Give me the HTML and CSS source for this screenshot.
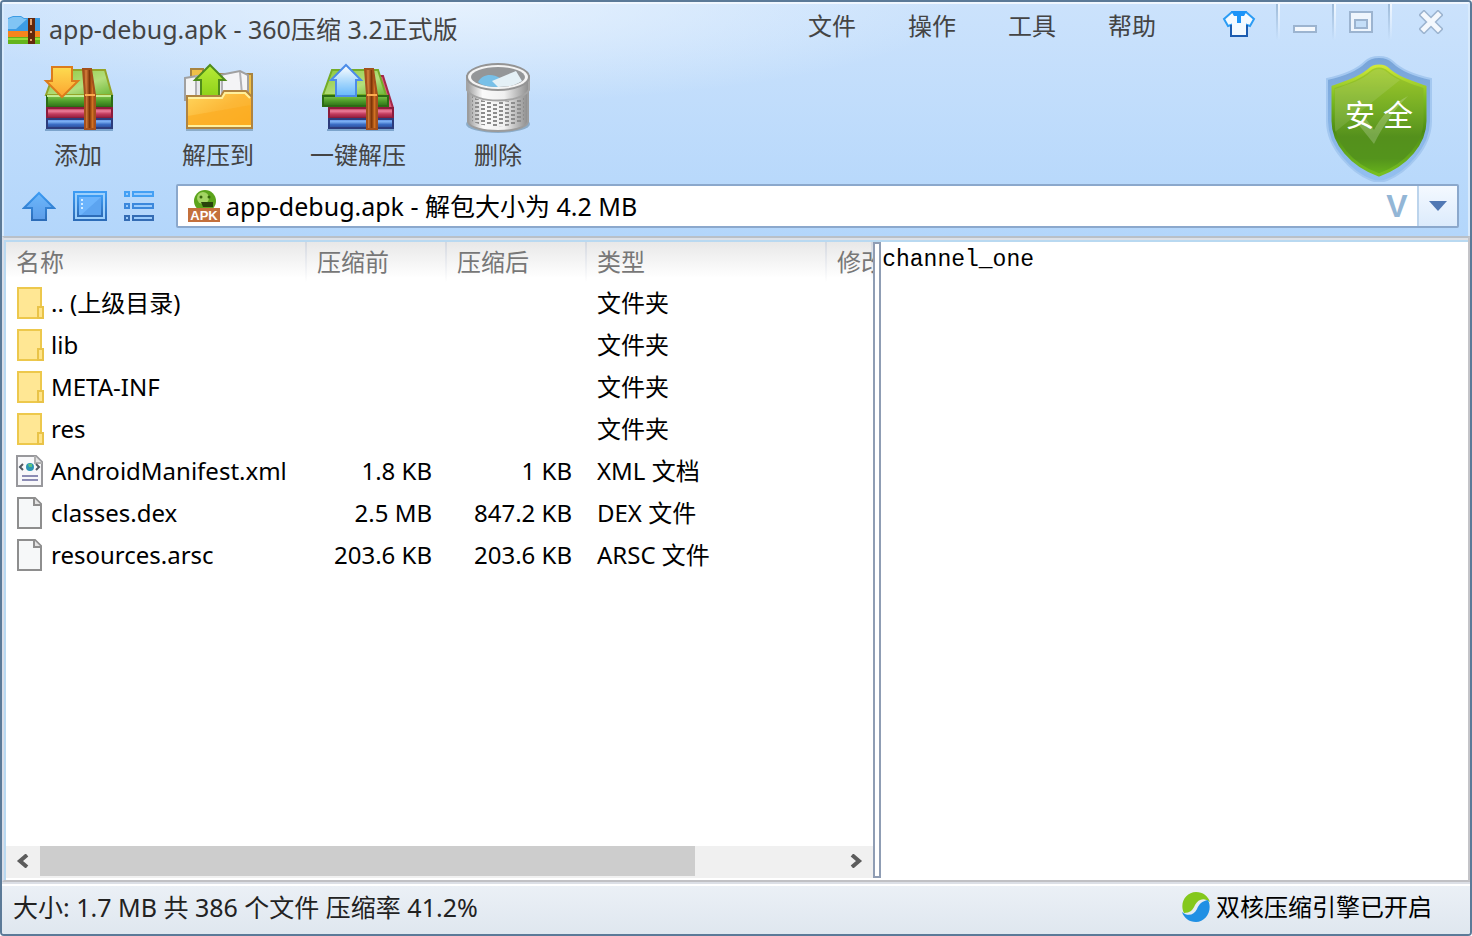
FILE: index.html
```html
<!DOCTYPE html>
<html lang="zh-CN">
<head>
    <meta charset="UTF-8">
    <meta name="viewport" content="width=device-width, initial-scale=1.0">
    <title>app-debug.apk - 360压缩</title>
    <link rel="stylesheet" href="styles.css">
</head>
<body>
    <!-- shared gradients -->
    <svg class="defs" width="0" height="0" aria-hidden="true">
        <defs>
            <linearGradient id="gGreenTop" x1="0" y1="0" x2="1" y2="1"><stop offset="0" stop-color="#8cc83c"/><stop offset=".6" stop-color="#b4de7c"/><stop offset="1" stop-color="#6db83a"/></linearGradient>
            <linearGradient id="gGreen" x1="0" y1="0" x2="0" y2="1"><stop offset="0" stop-color="#7cc44a"/><stop offset=".5" stop-color="#4f9c2a"/><stop offset="1" stop-color="#2f7018"/></linearGradient>
            <linearGradient id="gPink" x1="0" y1="0" x2="0" y2="1"><stop offset="0" stop-color="#b02848"/><stop offset=".3" stop-color="#ee7f9c"/><stop offset=".6" stop-color="#c23a5c"/><stop offset="1" stop-color="#8c1c3c"/></linearGradient>
            <linearGradient id="gBlue" x1="0" y1="0" x2="0" y2="1"><stop offset="0" stop-color="#5a8ae0"/><stop offset=".3" stop-color="#7cb0f4"/><stop offset=".6" stop-color="#3a6cc4"/><stop offset="1" stop-color="#2c4c98"/></linearGradient>
            <linearGradient id="gStrap" x1="0" y1="0" x2="1" y2="0"><stop offset="0" stop-color="#8a3c0c"/><stop offset=".25" stop-color="#d8803c"/><stop offset=".55" stop-color="#7c3408"/><stop offset=".8" stop-color="#d47424"/><stop offset="1" stop-color="#8a3c0c"/></linearGradient>
            <linearGradient id="gOrange" x1="0" y1="0" x2="0" y2="1"><stop offset="0" stop-color="#fddc50"/><stop offset="1" stop-color="#fca430"/></linearGradient>
            <linearGradient id="gLime" x1="0" y1="0" x2="0" y2="1"><stop offset="0" stop-color="#b8ec38"/><stop offset="1" stop-color="#8cd018"/></linearGradient>
            <linearGradient id="gSky" x1="0" y1="0" x2="0" y2="1"><stop offset="0" stop-color="#ffffff"/><stop offset=".6" stop-color="#a0d4fc"/><stop offset="1" stop-color="#68b8fc"/></linearGradient>
            <linearGradient id="gFolder" x1="0" y1="0" x2="1" y2="1"><stop offset="0" stop-color="#ffd860"/><stop offset=".5" stop-color="#fcb838"/><stop offset="1" stop-color="#fcac20"/></linearGradient>
            <linearGradient id="gMetal" x1="0" y1="0" x2="1" y2="0"><stop offset="0" stop-color="#9c9c9c"/><stop offset=".25" stop-color="#fafafa"/><stop offset=".6" stop-color="#f0f0f0"/><stop offset="1" stop-color="#8c8c8c"/></linearGradient>
            <linearGradient id="gNav" x1="0" y1="0" x2="0" y2="1"><stop offset="0" stop-color="#3c9cf4"/><stop offset="1" stop-color="#2c6cb8"/></linearGradient>
            <linearGradient id="gNavFill" x1="0" y1="0" x2="0" y2="1"><stop offset="0" stop-color="#6cb8fc"/><stop offset="1" stop-color="#5c9ce8"/></linearGradient>
            <linearGradient id="gShield" x1="0" y1="0" x2="0" y2="1"><stop offset="0" stop-color="#a4cc2c"/><stop offset=".4" stop-color="#74ac24"/><stop offset=".65" stop-color="#54901c"/><stop offset=".85" stop-color="#54941c"/><stop offset="1" stop-color="#68b41c"/></linearGradient>
            <linearGradient id="gShieldEdge" x1="0" y1="0" x2="0" y2="1"><stop offset="0" stop-color="#d0e838"/><stop offset=".3" stop-color="#7cbc20"/><stop offset=".6" stop-color="#4c8c14"/><stop offset="1" stop-color="#78c020"/></linearGradient>
            <linearGradient id="gShieldRim" x1="0" y1="0" x2="0" y2="1"><stop offset="0" stop-color="#78a4d8"/><stop offset="1" stop-color="#94c0f0"/></linearGradient>
            <pattern id="pMesh" width="12" height="8" patternUnits="userSpaceOnUse"><path d="M1 1h4M1 5h4M7 3h4M7 7h4" stroke="#8c8c8c" stroke-width="2"/></pattern>
            <symbol id="folder" viewBox="0 0 28 32">
                <path d="M2 1h23v30H2z" fill="#ffe794" stroke="#edc84c" stroke-width="2"/>
                <path d="M22 31V20h5v11z" fill="#ffe48a" stroke="#e9c348" stroke-width="2"/>
            </symbol>
            <symbol id="file" viewBox="0 0 28 32">
                <path d="M2 1h17l6 6v24H2z" fill="#f6f8f9" stroke="#8e8e8e" stroke-width="2"/>
                <path d="M18 1v7h7" fill="#e4e4e4" stroke="#8e8e8e" stroke-width="2"/>
            </symbol>
        </defs>
    </svg>

    <div class="window">
        <header class="top">
            <div class="title-row">
                <svg class="app-icon" width="32" height="28" viewBox="0 0 32 28">
                    <path d="M0 2l5-2h8l3 2h16v14H0z" fill="#3c9ce4"/>
                    <path d="M0 3l5-2h8l3 2h3L8 13H0z" fill="#80c4f4"/>
                    <path d="M0 15h32v6H0z" fill="#f8841c"/>
                    <path d="M0 21h32v7H0z" fill="#64b41c"/>
                    <path d="M0 22h32v2H0z" fill="#94dc38"/>
                    <path d="M20 2h7v26h-7z" fill="#64280c"/>
                    <path d="M23 3v6M23 15v2M23 23v2" stroke="#e4a470" stroke-width="2"/>
                </svg>
                <h1 class="title">app-debug.apk - 360压缩 3.2正式版</h1>
                <nav class="menu">
                    <button>文件</button>
                    <button>操作</button>
                    <button>工具</button>
                    <button>帮助</button>
                </nav>
                <button class="skin" aria-label="换肤">
                    <svg width="34" height="28" viewBox="0 0 34 28">
                        <path d="M10 2L2 9l4 7 3-1v11h16V15l3 1 4-7-8-7z" fill="#f4faff" stroke="#2c9cf4" stroke-width="2"/>
                        <path d="M9 15v11h16V15" fill="none" stroke="#1c5cb0" stroke-width="2"/>
                        <path d="M9 1h16l-3 5h-3v7h-4V6h-3z" fill="#1c94f8"/>
                    </svg>
                </button>
                <div class="win-buttons">
                    <button aria-label="最小化"><svg width="24" height="24" viewBox="0 0 24 24"><path d="M1 16h22v6H1z" fill="#f4f8fd" stroke="#9cb4d0" stroke-width="2"/></svg></button>
                    <button aria-label="最大化"><svg width="24" height="24" viewBox="0 0 24 24"><path d="M1 2h22v20H1z" fill="#eef5fd" stroke="#9cb4d0" stroke-width="2"/><path d="M6 10h12v8H6z" fill="#c4def8" stroke="#9cb4d0" stroke-width="2"/></svg></button>
                    <button class="close" aria-label="关闭"><svg width="24" height="24" viewBox="0 0 24 24"><path d="M5 5l14 14M19 5L5 19" stroke="#9cb4d0" stroke-width="8" stroke-linecap="square"/><path d="M5 5l14 14M19 5L5 19" stroke="#f4f8fd" stroke-width="5" stroke-linecap="square"/></svg></button>
                </div>
            </div>

            <div class="toolbar">
                <button class="tool">
                    <svg width="72" height="72" viewBox="0 0 72 72">
                        <path d="M3 67h68v2H3z" fill="#7ca4cc"/>
                        <path d="M13 8h50l7 25H4z" fill="url(#gGreenTop)" stroke="#94a428" stroke-width="2"/>
                        <path d="M5 34h65v11H5z" fill="url(#gGreen)" stroke="#2c6c14" stroke-width="2"/>
                        <path d="M5 33h64v2H5z" fill="#c4ec94"/>
                        <path d="M5 46h65v10H5z" fill="url(#gPink)" stroke="#8c1c3c" stroke-width="2"/>
                        <path d="M5 57h65v9H5z" fill="url(#gBlue)" stroke="#2c3c7c" stroke-width="2"/>
                        <path d="M41 7h8l4 26v34H43V33z" fill="url(#gStrap)" stroke="#a4501c" stroke-width="2"/>
                        <path d="M43 33h10" stroke="#fcac50" stroke-width="2"/>
                        <path d="M10 5h20v14h6L20 35 4 19h6z" fill="url(#gOrange)" stroke="#dc7c1c" stroke-width="2"/>
                    </svg>
                    <span>添加</span>
                </button>
                <button class="tool">
                    <svg width="72" height="72" viewBox="0 0 72 72">
                        <path d="M4 67h67v2H4z" fill="#8cacc8"/>
                        <path d="M9 7h12v5h49v54H9z" fill="#f0c048" stroke="#a88440" stroke-width="2"/>
                        <path d="M3 16l12-2v24H3z" fill="#f4f4f4" stroke="#a0a0a0" stroke-width="2"/>
                        <path d="M38 13l20-4 8 4v24H38z" fill="#f4f4f6" stroke="#a0a0a0" stroke-width="2"/>
                        <path d="M58 10l2 22M14 14h26v20H14z" fill="#e8e8ea" stroke="#b0b0b4" stroke-width="2"/>
                        <path d="M28 3l15 15h-6v18H19V18h-6z" fill="url(#gLime)" stroke="#508c1c" stroke-width="2"/>
                        <path d="M5 34h34l3-5h22l6 6v31H5z" fill="url(#gFolder)" stroke="#b08440" stroke-width="2"/>
                        <path d="M6 54L69 43v21H6z" fill="#fcac20" opacity=".6"/>
                        <path d="M6 36h34l3-5h20l5 5M6 64h63" fill="none" stroke="#fff09c" stroke-width="2"/>
                    </svg>
                    <span>解压到</span>
                </button>
                <button class="tool">
                    <svg width="72" height="72" viewBox="0 0 72 72">
                        <path d="M5 67h68v2H5z" fill="#7ca4cc"/>
                        <path d="M56 14h5l10 32H56z" fill="#e05c7c" stroke="#a42848" stroke-width="2"/>
                        <path d="M10 8h46l8 25H1z" fill="url(#gGreenTop)" stroke="#74ac28" stroke-width="2"/>
                        <path d="M1 34h65v10H1z" fill="url(#gGreen)" stroke="#2c6c14" stroke-width="2"/>
                        <path d="M7 46h64v10H7z" fill="url(#gPink)" stroke="#8c1c3c" stroke-width="2"/>
                        <path d="M7 57h64v9H7z" fill="url(#gBlue)" stroke="#2c3c7c" stroke-width="2"/>
                        <path d="M43 7h8l4 26v34H45V33z" fill="url(#gStrap)" stroke="#a4501c" stroke-width="2"/>
                        <path d="M45 33h10" stroke="#fcac50" stroke-width="2"/>
                        <path d="M24 3l15 15h-5v16H14V18H9z" fill="url(#gSky)" stroke="#4c8ce8" stroke-width="2"/>
                    </svg>
                    <span>一键解压</span>
                </button>
                <button class="tool">
                    <svg width="72" height="72" viewBox="0 0 72 72">
                        <ellipse cx="36" cy="62" rx="32" ry="9" fill="#8cacc8"/>
                        <path d="M6 24v36c4 12 56 12 60 0V24z" fill="url(#gMetal)" stroke="#9c9c9c" stroke-width="2"/>
                        <path d="M10 34c10 8 42 8 52 0v25c-10 7-42 7-52 0z" fill="url(#pMesh)"/>
                        <path d="M5 14v14c8 14 54 14 62 0V14z" fill="url(#gMetal)" stroke="#a4a4a4" stroke-width="2"/>
                        <ellipse cx="36" cy="15" rx="31" ry="13" fill="#f4f4f4" stroke="#949494" stroke-width="2"/>
                        <ellipse cx="36" cy="15" rx="27" ry="10" fill="#949698"/>
                        <path d="M16 20c4-8 14-9 22-4v9c-10 0-18-1-22-5z" fill="#78c0e8"/>
                        <path d="M30 19L54 9l6 10c-6 4-14 6-24 6z" fill="#e4f0f6"/>
                    </svg>
                    <span>删除</span>
                </button>
                <button class="shield">
                    <svg width="106" height="126" viewBox="0 0 106 126">
                        <path d="M53 1c5 0 10 1 14 5 10 10 24 14 38 17v42c0 28-26 52-44 59-5 2-11 2-16 0C27 117 1 93 1 65V23c14-3 28-7 38-17 4-4 9-5 14-5z" fill="url(#gShieldRim)" stroke="#a4c8f0" stroke-width="2"/>
                        <path d="M53 10c4 0 7 1 10 4 9 8 22 12 36 17v34c0 22-18 44-46 54C25 109 7 87 7 65V31c14-5 27-9 36-17 3-3 6-4 10-4z" fill="url(#gShield)" stroke="url(#gShieldEdge)" stroke-width="3"/>
                        <path d="M9 33c14-5 28-9 36-17 5-4 11-4 16 0 5 4 8 6 13 8L9 76z" fill="#fff" opacity=".1"/>
                        <path d="M32 68l8-5 8 11c6-12 18-26 34-34-16 16-26 32-34 48z" fill="#fff" opacity=".2"/>
                        <text class="shield-text" x="53" y="70" text-anchor="middle">安 全</text>
                    </svg>
                </button>
            </div>

            <div class="address-row">
                <div class="nav-buttons">
                    <button aria-label="向上"><svg width="34" height="30" viewBox="0 0 34 30"><path d="M17 2l15 15h-8v12H10V17H2z" fill="url(#gNavFill)" stroke="url(#gNav)" stroke-width="2"/></svg></button>
                    <button aria-label="预览"><svg width="34" height="30" viewBox="0 0 34 30"><path d="M1 1h32v28H1z" fill="#9cd0fc" stroke="url(#gNav)" stroke-width="2"/><path d="M5 5h24v20H5z" fill="#6cb4fc" stroke="url(#gNav)" stroke-width="2"/><path d="M28 6v18H8z" fill="#5ca4f0"/><path d="M9 8v2M9 12v2M9 16v2" stroke="#d4ecff" stroke-width="2"/></svg></button>
                    <button aria-label="列表"><svg width="30" height="30" viewBox="0 0 30 30" fill="#9cccfc" stroke-width="2"><path d="M1 1h4v4H1zM9 1h20v4H9z" stroke="#44a0f4"/><path d="M1 13h4v4H1zM9 13h20v4H9z" stroke="#3c88dc"/><path d="M1 25h4v4H1zM9 25h20v4H9z" stroke="#346cb4"/></svg></button>
                </div>
                <div class="address">
                    <svg class="apk-icon" width="32" height="34" viewBox="0 0 32 34">
                        <circle cx="17" cy="12" r="11" fill="#5ca41c"/>
                        <circle cx="15" cy="9" r="6" fill="#a4d464"/>
                        <circle cx="13" cy="8" r="1.5" fill="#38640c"/><circle cx="21" cy="8" r="1.5" fill="#38640c"/>
                        <path d="M13 13h12v5H15z" fill="#28440c"/>
                        <path d="M0 19h32v14H0z" fill="#c4703c"/>
                        <text class="apk-text" x="16" y="31" text-anchor="middle">APK</text>
                    </svg>
                    <input type="text" aria-label="路径" value="app-debug.apk - 解包大小为 4.2 MB">
                    <button class="virus" aria-label="扫描">V</button>
                    <button class="drop" aria-label="展开"><svg width="18" height="10" viewBox="0 0 18 10"><path d="M0 0h18L9 10z" fill="#5078b4"/></svg></button>
                </div>
            </div>
        </header>

        <main class="panes">
            <section class="list-pane">
                <div class="table-wrap">
                    <table>
                        <colgroup><col class="c-name"><col class="c-size"><col class="c-size"><col class="c-type"><col></colgroup>
                        <thead>
                            <tr><th>名称</th><th>压缩前</th><th>压缩后</th><th>类型</th><th>修改</th></tr>
                        </thead>
                        <tbody>
                            <tr><td><svg width="28" height="32"><use href="#folder"/></svg>.. (上级目录)</td><td></td><td></td><td>文件夹</td><td></td></tr>
                            <tr><td><svg width="28" height="32"><use href="#folder"/></svg>lib</td><td></td><td></td><td>文件夹</td><td></td></tr>
                            <tr><td><svg width="28" height="32"><use href="#folder"/></svg>META-INF</td><td></td><td></td><td>文件夹</td><td></td></tr>
                            <tr><td><svg width="28" height="32"><use href="#folder"/></svg>res</td><td></td><td></td><td>文件夹</td><td></td></tr>
                            <tr><td><svg width="28" height="32" viewBox="0 0 28 32"><path d="M1 1h19l6 6v24H1z" fill="#f8f8fa" stroke="#98989c" stroke-width="2"/><path d="M19 1v7h7" fill="#e4e4e4" stroke="#b0b0b0" stroke-width="2"/><circle cx="14" cy="12" r="4" fill="#2c94b4"/><path d="M12 9h4v3h-3z" fill="#5cc47c"/><path d="M7 9l-3 3 3 3M20 9l3 3-3 3" fill="none" stroke="#505860" stroke-width="2"/><path d="M6 21h16M6 25h16" stroke="#8c8cb4" stroke-width="2"/></svg>AndroidManifest.xml</td><td>1.8 KB</td><td>1 KB</td><td>XML 文档</td><td></td></tr>
                            <tr><td><svg width="28" height="32"><use href="#file"/></svg>classes.dex</td><td>2.5 MB</td><td>847.2 KB</td><td>DEX 文件</td><td></td></tr>
                            <tr><td><svg width="28" height="32"><use href="#file"/></svg>resources.arsc</td><td>203.6 KB</td><td>203.6 KB</td><td>ARSC 文件</td><td></td></tr>
                        </tbody>
                    </table>
                </div>
                <div class="scrollbar">
                    <button aria-label="向左"><svg width="14" height="14" viewBox="0 0 14 14"><path d="M11 1L4 7l7 6" fill="none" stroke="#5c5c5c" stroke-width="4"/></svg></button>
                    <div class="track"><div class="thumb"></div></div>
                    <button aria-label="向右"><svg width="14" height="14" viewBox="0 0 14 14"><path d="M3 1l7 6-7 6" fill="none" stroke="#5c5c5c" stroke-width="4"/></svg></button>
                </div>
            </section>
            <div class="splitter"></div>
            <section class="comment">channel_one</section>
        </main>

        <footer class="status">
            <span>大小: 1.7 MB 共 386 个文件 压缩率 41.2%</span>
            <span class="engine">
                <svg width="32" height="32" viewBox="0 0 32 32">
                    <path d="M4 22C-1 12 6 1 16 1c7 0 12 4 14 10-6-5-12-3-15 3-2 5-5 8-11 8z" fill="#84c81c"/>
                    <path d="M28 9c5 10-2 22-12 22-7 0-12-4-14-10 6 5 12 3 15-3 2-5 5-8 11-9z" fill="#2090e4"/>
                </svg>
                双核压缩引擎已开启
            </span>
        </footer>
    </div>
</body>
</html>
```
FILE: styles.css
```css
* {
    box-sizing: border-box;
}
body {
    margin: 0;
    font-family: "Noto Sans", "Noto Sans CJK SC", sans-serif;
    font-size: 24px;
    line-height: 32px;
    color: #000;
}
button {
    padding: 0;
    border: none;
    background: none;
    font: inherit;
    color: inherit;
    cursor: pointer;
}
svg {
    display: block;
    flex: none;
}
.defs {
    position: absolute;
}
.window {
    display: flex;
    flex-direction: column;
    height: 100vh;
    border: 2px solid #5b7a98;
    border-radius: 4px;
    overflow: hidden;
}

/* header */
.top {
    flex: none;
    border-top: 2px solid #f0f7ff;
    border-right: 2px solid #d8eafc;
    border-left: 2px solid #d8eafc;
    background: radial-gradient(ellipse 520px 100px at 30% 0, rgba(236, 245, 254, 0.8), rgba(236, 245, 254, 0)), linear-gradient(#cbe2fc, #b3d6fb);
}
.title-row {
    display: flex;
    height: 52px;
    padding-left: 4px;
    color: #444;
}
.app-icon {
    margin-top: 12px;
}
.title {
    flex: 1;
    margin: 9px 0 0 9px;
    font-size: 25px;
    font-weight: normal;
    white-space: nowrap;
}
.menu {
    display: flex;
    gap: 52px;
    height: 44px;
    margin-right: 66px;
}
.skin {
    display: flex;
    align-items: center;
    height: 40px;
    margin-right: 20px;
}
.win-buttons {
    display: flex;
    height: 36px;
}
.win-buttons button {
    display: flex;
    align-items: center;
    justify-content: center;
    width: 56px;
    padding-left: 2px;
    background: linear-gradient(#9ebbd9, rgba(158, 187, 217, 0)) left / 2px 100% no-repeat, linear-gradient(#f0f7ff, rgba(240, 247, 255, 0)) 2px 0 / 2px 100% no-repeat;
}
.win-buttons .close {
    width: 80px;
    padding-left: 6px;
}
.toolbar {
    display: flex;
    height: 126px;
    padding-left: 4px;
    color: #444;
}
.tool {
    display: flex;
    flex-direction: column;
    align-items: center;
    width: 140px;
    padding-top: 6px;
    gap: 5px;
}
.shield {
    margin: 0 36px 0 auto;
}
.shield-text {
    font-size: 30px;
    fill: #fff;
}
.address-row {
    display: flex;
    align-items: center;
    height: 54px;
    padding: 0 9px 6px 18px;
}
.nav-buttons {
    display: flex;
    gap: 17px;
    margin-right: 22px;
}
.address {
    display: flex;
    flex: 1;
    align-items: center;
    height: 44px;
    padding-left: 10px;
    border: 2px solid #8ba8cc;
    border-radius: 2px;
    background: #fff;
}
.apk-text {
    font: bold 13px "Liberation Sans", sans-serif;
    fill: #fff;
}
.address input {
    flex: 1;
    min-width: 0;
    padding: 0 6px;
    border: none;
    outline: none;
    background: none;
    font: inherit;
    font-size: 25px;
}
.virus {
    width: 40px;
    font: bold 32px "Liberation Sans", sans-serif;
    color: #93b6d6;
}
.drop {
    display: flex;
    align-items: center;
    justify-content: center;
    width: 40px;
    height: 100%;
    border-left: 2px solid #bcd4ec;
    background: linear-gradient(#f4f9ff, #dcebfc);
}

/* file list and comment */
.panes {
    display: grid;
    flex: 1;
    grid-template-columns: 868fr 8px 586fr;
    min-height: 0;
    padding: 4px 0 2px;
    border-top: 2px solid #b9c0c8;
    border-left: 2px solid #d9dee8;
    border-right: 2px solid #c4c4c8;
    border-bottom: 2px solid #c0c0c4;
    background: #fff;
    box-shadow: inset 0 2px #dde1e8, inset 2px 4px #b9d9f1;
}
.list-pane {
    display: flex;
    flex-direction: column;
    min-width: 0;
    margin-left: 2px;
}
.table-wrap {
    flex: 1;
    overflow: hidden;
}
table {
    width: 100%;
    table-layout: fixed;
    border-collapse: collapse;
}
.c-name {
    width: 301px;
}
.c-size {
    width: 140px;
}
.c-type {
    width: 240px;
}
th {
    height: 40px;
    padding: 0 0 0 10px;
    overflow: hidden;
    background: linear-gradient(#d4d8e0, #fff) right / 2px 100% no-repeat, linear-gradient(#e8e8e8, #fff 90%);
    font-weight: normal;
    text-align: left;
    white-space: nowrap;
    color: #777;
}
td {
    height: 42px;
    padding: 0 0 0 10px;
    white-space: nowrap;
}
td svg {
    display: inline-block;
    margin-right: 7px;
    vertical-align: -7px;
}
td:nth-child(2),
td:nth-child(3) {
    padding: 0 15px 0 0;
    text-align: right;
}
.scrollbar {
    display: flex;
    flex: none;
    height: 32px;
    padding-bottom: 2px;
    background: #f0f0f0;
}
.scrollbar button {
    display: flex;
    align-items: center;
    justify-content: center;
    width: 34px;
}
.track {
    flex: 1;
}
.thumb {
    width: 82%;
    height: 100%;
    background: #cdcdcd;
}
.splitter {
    border: 2px solid #8f9db4;
}
.comment {
    padding: 2px 1px;
    font-family: "Liberation Mono", monospace;
    font-size: 23px;
}

/* status bar */
.status {
    display: flex;
    flex: none;
    align-items: center;
    justify-content: space-between;
    height: 52px;
    padding: 0 38px 4px 11px;
    border-top: 2px solid #dcdfe6;
    background: linear-gradient(#fff 2px, #ebf0f6 2px, #dfe7ef);
    font-size: 25px;
    color: #222;
}
.engine {
    display: flex;
    align-items: center;
    gap: 4px;
    font-size: 24px;
    color: #000;
}
```
